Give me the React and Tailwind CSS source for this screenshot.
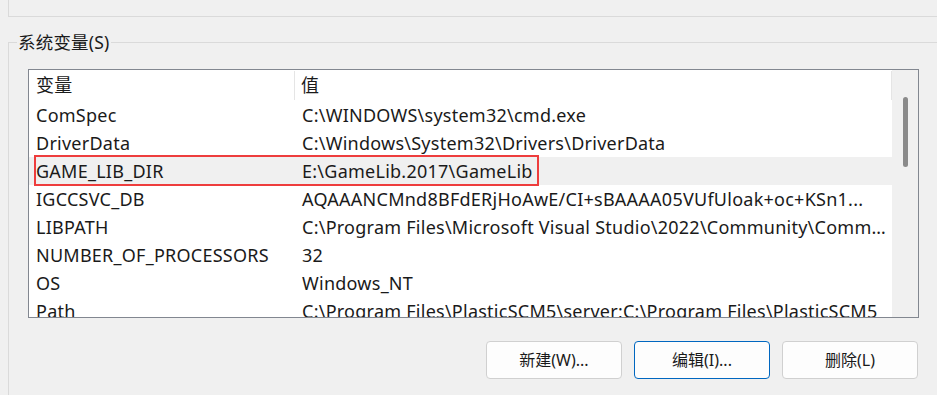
import React from 'react';

const rows = [
  ['ComSpec', 'C:\\WINDOWS\\system32\\cmd.exe'],
  ['DriverData', 'C:\\Windows\\System32\\Drivers\\DriverData'],
  ['GAME_LIB_DIR', 'E:\\GameLib.2017\\GameLib'],
  ['IGCCSVC_DB', 'AQAAANCMnd8BFdERjHoAwE/CI+sBAAAA05VUfUloak+oc+KSn1...'],
  ['LIBPATH', 'C:\\Program Files\\Microsoft Visual Studio\\2022\\Community\\Comm...'],
  ['NUMBER_OF_PROCESSORS', '32'],
  ['OS', 'Windows_NT'],
  ['Path', 'C:\\Program Files\\PlasticSCM5\\server;C:\\Program Files\\PlasticSCM5'],
];

const SELECTED = 2;

const Btn = ({ children, focused }) => (
  <button
    className={
      focused
        ? 'w-[136px] h-[38px] rounded-[4px] border border-[#0067c0] bg-[#fdfdfd] text-[16px] text-[#1a1a1a]'
        : 'w-[136px] h-[38px] rounded-[4px] border border-[#d0d0d0] bg-[#fdfdfd] text-[16px] text-[#1a1a1a]'
    }
  >
    {children}
  </button>
);

export default function App() {
  return (
    <div
      className="w-[937px] h-[395px] bg-[#f0f0f0] overflow-hidden text-[#1a1a1a]"
      style={{ fontFamily: '"Noto Sans", "Noto Sans CJK SC", sans-serif' }}
    >
      {/* bottom of the user-variables group above */}
      <div className="ml-[8px] h-[17px] border-l border-b border-[#dadada]" />

      {/* system variables group */}
      <div className="relative mt-[25px] ml-[8px] border-l border-t border-[#dadada] pl-[19px] pt-[26px]">
        <span className="absolute left-[8px] -top-[14px] bg-[#f0f0f0] px-[1px] text-[17.5px] leading-[26px] tracking-[0.2px]">
          系统变量(S)
        </span>

        <div className="relative w-[891px] h-[249px] border border-[#828790] bg-white flex overflow-hidden">
          <div className="flex-1 min-w-0 flex flex-col text-[18px] tracking-[0.25px]">
            <div className="flex h-[31px] shrink-0">
              <div className="w-[266px] pl-[7px] flex items-center border-r border-[#e5e5e5] my-[1px]">变量</div>
              <div className="flex-1 pl-[6px] flex items-center border-r border-[#e5e5e5] my-[1px]">值</div>
            </div>
            {rows.map(([name, value], i) => (
              <div
                key={name}
                className={i === SELECTED ? 'flex h-[28px] shrink-0 items-center bg-[#f0f0f0]' : 'flex h-[28px] shrink-0 items-center'}
              >
                <div className="w-[267px] pl-[7px] whitespace-nowrap">{name}</div>
                <div className="flex-1 min-w-0 pl-[6px] pr-[6px] truncate">{value}</div>
              </div>
            ))}
          </div>

          {/* scrollbar */}
          <div className="w-[26px] shrink-0 bg-[#f0f0f0] pt-[27px] flex justify-center">
            <div className="w-[5px] h-[70px] rounded-full bg-[#8a8a8a]" />
          </div>

          {/* annotation */}
          <div className="absolute left-[5px] top-[85px] w-[505px] h-[31px] border-2 border-[#ee3d3d] pointer-events-none" />
        </div>

        <div className="w-[891px] flex justify-end gap-[12px] pr-[1px] mt-[23px]">
          <Btn>新建(W)...</Btn>
          <Btn focused>编辑(I)...</Btn>
          <Btn>删除(L)</Btn>
        </div>
        <div className="h-[40px]" />
      </div>
    </div>
  );
}
